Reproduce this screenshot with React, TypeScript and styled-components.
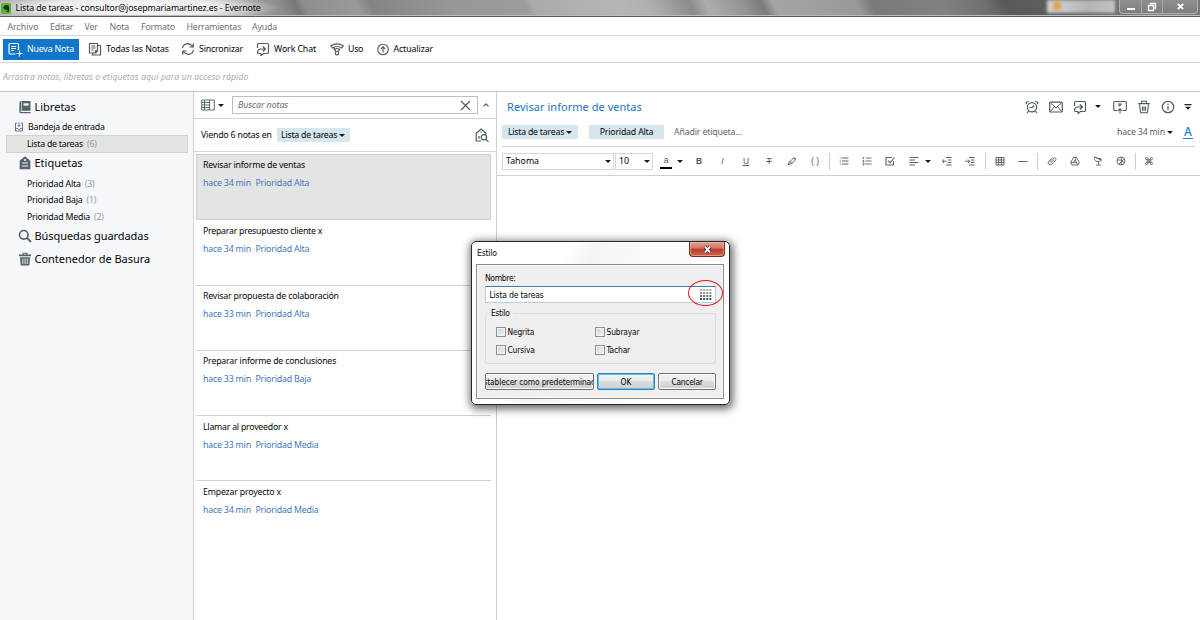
import React from 'react';
import styled, { createGlobalStyle } from 'styled-components';

const GlobalStyle = createGlobalStyle`
  *, *::before, *::after { box-sizing: border-box; }
  body { margin: 0; background: #fff; font-family: "Noto Sans", "Open Sans", sans-serif; overflow: hidden; }
`;

/* ---------- shared pieces ---------- */

const Text = styled.span<{ $size?: number; $track?: number; $color?: string; $italic?: boolean }>`
  font-size: ${p => p.$size ?? 8.8}px;
  letter-spacing: ${p => p.$track ?? -0.2}px;
  color: ${p => p.$color ?? '#050508'};
  font-style: ${p => (p.$italic ? 'italic' : 'normal')};
  line-height: 12px;
  white-space: nowrap;
  flex: none;
`;

const Caret = styled.i<{ $w?: number }>`
  width: 0;
  height: 0;
  flex: none;
  border: ${p => (p.$w ?? 6) / 2}px solid transparent;
  border-top: 3.5px solid #15191b;
  border-bottom: 0;
`;

const Glyph = styled.svg<{ $c?: string }>`
  display: block;
  flex: none;
  fill: none;
  stroke: ${p => p.$c ?? '#4d5c60'};
  stroke-width: 1.2;
  stroke-linejoin: round;
`;

type GlyphProps = { size?: number; color?: string; vb?: number; children: React.ReactNode };
const Icon = ({ size = 14, color, vb = 14, children }: GlyphProps) => (
  <Glyph width={size} height={size} viewBox={`0 0 ${vb} ${vb}`} $c={color}>{children}</Glyph>
);

/* ---------- window frame ---------- */

const Window = styled.div`
  position: relative;
  width: 1200px;
  height: 620px;
  display: flex;
  flex-direction: column;
  background: #fff;
  overflow: hidden;
`;

const TitleBar = styled.header`
  position: relative;
  height: 17px;
  flex: none;
  display: flex;
  align-items: center;
  padding-left: 1px;
  border-bottom: 1px solid #5c5c5c;
  box-shadow: inset 0 -1px 0 #bdbdbd;
  background:
    radial-gradient(ellipse 150px 16px at 130px 8px, rgba(255,255,255,.95) 0, rgba(255,255,255,.75) 60%, rgba(255,255,255,0) 100%),
    linear-gradient(64deg, #aaa 0, #b5b5b5 190px, #8d8d8d 256px, #777 271px, #8d8d8d 278px, #9a9a9a 325px, #848484 338px,
      #979797 410px, #9c9c9c 476px, #aaa 484px, #b6b6b6 560px, #afafaf 590px, #8c8c8c 625px, #adadad 640px,
      #949494 672px, #7c7c7c 690px, #a5a5a5 701px, #999 775px, #797979 789px, #818181 850px, #707070 890px, #585858 910px, #666 990px, #858585 1040px, #777 1080px);
`;

const AppMark = styled.span`
  width: 10px;
  height: 11px;
  margin-right: 4.5px;
  border-radius: 2px;
  background: #5bb637;
`;

const BlurredTab = styled.div`
  position: absolute;
  left: 1047px;
  top: 0;
  width: 68px;
  height: 13px;
  background: radial-gradient(circle at 10px 6px, #e5a23c 0, #e5a23c 3px, transparent 5px),
    linear-gradient(90deg, #cfcfcf, #c6c6c6 30%, #b4b4b4 60%, #c2c2c2);
  filter: blur(1.5px);
`;

const Controls = styled.div`
  position: absolute;
  right: 2px;
  top: 0;
  height: 14px;
  display: flex;
  border: 1px solid #b0b0b0;
  border-top: 0;
  border-radius: 0 0 4px 4px;
  background: linear-gradient(#8f8f8f, #7e7e7e);
`;

const Control = styled.span<{ $w: number }>`
  width: ${p => p.$w}px;
  display: flex;
  align-items: center;
  justify-content: center;
  & + & { border-left: 1px solid #a8a8a8; }
`;

const MenuBar = styled.nav`
  height: 19px;
  flex: none;
  display: flex;
  align-items: center;
  padding: 1px 0 0 7.5px;
  border-bottom: 1px solid #d9d9d9;
`;

const MenuItem = styled.span<{ $w: number }>`
  width: ${p => p.$w}px;
  display: flex;
`;

const Toolbar = styled.div`
  height: 27px;
  flex: none;
  display: flex;
  align-items: center;
  padding-left: 3px;
  border-bottom: 1px solid #d4d4d4;
`;

const NewNote = styled.button`
  width: 76px;
  height: 21px;
  padding: 0 0 0 5px;
  border: 0;
  display: flex;
  align-items: center;
  gap: 4px;
  background: #1076cb;
  font-family: inherit;
`;

const Tool = styled.span<{ $w: number; $gap?: number }>`
  width: ${p => p.$w}px;
  display: flex;
  align-items: center;
  gap: ${p => p.$gap ?? 4}px;
`;

const ToolLabel = styled.span`
  display: flex;
  padding-bottom: 1px;
`;

const ShortcutBar = styled.div`
  height: 29px;
  flex: none;
  display: flex;
  align-items: center;
  padding-left: 3px;
  border-bottom: 1px solid #c9c9c9;
`;

const Body = styled.div`
  flex: 1;
  min-height: 0;
  display: flex;
`;

/* ---------- sidebar ---------- */

const Sidebar = styled.aside`
  width: 194px;
  flex: none;
  background: #f6f7fb;
  border-right: 1px solid #d2d2d4;
  padding-top: 4px;
`;

const Section = styled.div<{ $h: number }>`
  height: ${p => p.$h}px;
  padding: 0 0 1.5px 18px;
  display: flex;
  align-items: center;
  gap: 2.5px;
`;

const Entry = styled.div<{ $h?: number; $on?: boolean; $pad?: number }>`
  height: ${p => p.$h ?? 16.5}px;
  margin: 0 5px 0 6px;
  padding-left: ${p => p.$pad ?? 21}px;
  display: flex;
  align-items: center;
  gap: 4px;
  background: ${p => (p.$on ? '#e4e4e4' : 'transparent')};
  border: ${p => (p.$on ? '1px solid #d2d2d2' : '0')};
  ${p => p.$on && 'padding-left: 20px;'}
`;

/* ---------- note list ---------- */

const ListPane = styled.section`
  width: 303px;
  flex: none;
  border-right: 1px solid #cfcfcf;
  display: flex;
  flex-direction: column;
`;

const SearchRow = styled.div`
  height: 27px;
  flex: none;
  display: flex;
  align-items: center;
  padding-left: 7px;
  border-bottom: 1px solid #d4d4d4;
`;

const SearchBox = styled.div`
  width: 246px;
  height: 18px;
  margin: 0 5px 0 8px;
  padding: 0 6px 0 5px;
  border: 1px solid #bdbdbd;
  display: flex;
  align-items: center;
  justify-content: space-between;
`;

const InfoRow = styled.div`
  height: 33px;
  flex: none;
  display: flex;
  align-items: center;
  padding: 0 6px 0 7px;
  border-bottom: 1px solid #d4d4d4;
`;

const Chip = styled.span<{ $w: number }>`
  width: ${p => p.$w}px;
  height: 14px;
  display: flex;
  align-items: center;
  justify-content: center;
  gap: 2px;
  background: #d5e6ec;
`;

const Spacer = styled.span`flex: 1;`;

const Notes = styled.div`padding: 2px 5px 0 2px;`;

const Note = styled.article<{ $on?: boolean }>`
  height: ${p => (p.$on ? 66.3 : 65.25)}px;
  padding: ${p => (p.$on ? 4.4 : 4.6)}px 0 0 ${p => (p.$on ? 6 : 7)}px;
  display: flex;
  flex-direction: column;
  gap: 6px;
  background: ${p => (p.$on ? '#e4e4e4' : 'transparent')};
  border: 0 solid #d0d0d0;
  border-width: ${p => (p.$on ? '1px' : '0 0 1px')};
  &:last-child { border-bottom: 0; }
`;

const Meta = styled.div`
  display: flex;
  height: 12px;
`;

const MetaTime = styled.span`
  width: 52.5px;
  display: flex;
`;

/* ---------- editor ---------- */

const Editor = styled.main`
  flex: 1;
  min-width: 0;
  display: flex;
  flex-direction: column;
`;

const HeadRow = styled.div`
  height: 31px;
  flex: none;
  display: flex;
  align-items: center;
  padding: 0 6px 1.5px 10px;
`;

const TagRow = styled.div`
  height: 24px;
  margin: 0 5px;
  flex: none;
  display: flex;
  align-items: flex-start;
  padding: 2px 2px 0 0;
  border-bottom: 1px solid #cfcfcf;
  & > * { height: 14px; align-items: center; line-height: 14px; }
`;

const TagGap = styled.span<{ $w: number }>`width: ${p => p.$w}px;`;

const FormatRow = styled.div`
  height: 29px;
  flex: none;
  display: flex;
  align-items: center;
  padding-left: 5px;
  border-bottom: 1px solid #cfcfcf;
`;

const Picker = styled.div<{ $w: number }>`
  width: ${p => p.$w}px;
  height: 17px;
  padding: 0 2px 0 3px;
  border: 1px solid #d5d5dc;
  display: flex;
  align-items: center;
  justify-content: space-between;
  & + & { margin-left: 1px; }
`;

const Cell = styled.span<{ $w: number }>`
  width: ${p => p.$w}px;
  height: 16px;
  flex: none;
  display: flex;
  align-items: center;
  justify-content: center;
`;

const Divider = styled.i`
  width: 1px;
  height: 17px;
  flex: none;
  background: #c5d0dd;
`;

const FontColor = styled.span`
  width: 12px;
  height: 15px;
  display: flex;
  justify-content: center;
  border-bottom: 2px solid #000;
`;

const Letter = styled.span<{ $deco?: string; $italic?: boolean; $bold?: boolean }>`
  font: ${p => (p.$italic ? 'italic' : 'normal')} ${p => (p.$bold ? 700 : 400)} 8.5px/12px "Liberation Sans", sans-serif;
  text-decoration: ${p => p.$deco ?? 'none'};
  color: #555;
`;

const AccentA = styled.span`
  width: 10px;
  margin-left: 9px;
  display: flex;
  justify-content: center;
  font: 500 12px/12px "Noto Sans", sans-serif;
  color: #1a7fd0;
  border-bottom: 1px solid #1a7fd0;
`;

/* ---------- dialog ---------- */

const Dialog = styled.div`
  position: absolute;
  left: 471px;
  top: 241px;
  width: 259px;
  height: 164px;
  padding: 0 5px 5px 4px;
  border: 1.5px solid #24282a;
  border-radius: 5px;
  background: linear-gradient(115deg, #fff 0, #fff 30%, #f4f4f4 38%, #fbfbfb 55%, #fff 100%);
  box-shadow: 1px 2px 8px 2px rgba(0,0,0,.6), inset 0 0 0 1px #fff;
  display: flex;
  flex-direction: column;
  font-family: "DejaVu Sans Condensed", "DejaVu Sans", sans-serif;
`;

const DialogTitle = styled.div`
  height: 22px;
  flex: none;
  display: flex;
  align-items: center;
  justify-content: space-between;
  padding-left: 1px;
  margin-right: -1px;
`;

const CloseButton = styled.span`
  align-self: flex-start;
  width: 36px;
  height: 15px;
  display: flex;
  align-items: center;
  justify-content: center;
  border: 1px solid #6d3029;
  border-top: 0;
  border-radius: 0 0 4px 4px;
  box-shadow: inset 0 0 0 1px rgba(255,200,185,.5);
  background: linear-gradient(#e3a293 0, #d4735f 45%, #b93a25 50%, #cf6651 100%);
`;

const DialogBody = styled.div`
  flex: 1;
  padding: 7px 7px 0 8px;
  border: 1px solid #8a8a8a;
  box-shadow: inset 0 0 0 1px #fafafa;
  background: #efefef;
  display: flex;
  flex-direction: column;
`;

const NameField = styled.div`
  position: relative;
  height: 17px;
  margin-top: 2px;
  padding: 0 3px 0 3.5px;
  display: flex;
  align-items: center;
  justify-content: space-between;
  background: #fff;
  border: 1px solid #b5cfe7;
  border-top-color: #3d7bad;
`;

const RedMark = styled.span`
  position: absolute;
  right: -8px;
  top: -7px;
  width: 35px;
  height: 26px;
  border: 1.4px solid #e3151f;
  border-radius: 50%;
`;

const StyleGroup = styled.fieldset`
  height: 57px;
  margin: 4px 0 0;
  padding: 4px 0 0 10px;
  border: 1px solid #d5dfe5;
  border-radius: 2px;
  min-width: 0;
  display: grid;
  grid-template-columns: 99px 1fr;
  grid-auto-rows: 18px;
`;

const Legend = styled.legend`
  display: flex;
  margin-left: -8px;
  padding: 0 3px;
`;

const Check = styled.label`
  display: flex;
  align-items: center;
  gap: 1.5px;
`;

const Box = styled.i`
  width: 10px;
  height: 10px;
  border: 1px solid #8e8f8f;
  box-shadow: inset 0 0 0 1px #f4f4f4;
  background: linear-gradient(135deg, #cdd1d5, #f5f5f5);
`;

const Buttons = styled.div`
  display: flex;
  justify-content: space-between;
  margin-top: 9px;
`;

const Button = styled.button<{ $w: number; $primary?: boolean }>`
  width: ${p => p.$w}px;
  height: 17px;
  padding: 0;
  display: flex;
  align-items: center;
  justify-content: center;
  overflow: hidden;
  font-family: inherit;
  border: 1px solid ${p => (p.$primary ? '#3c7fb1' : '#707070')};
  border-radius: 2px;
  box-shadow: inset 0 0 0 1px ${p => (p.$primary ? '#4cc8f0' : '#fbfbfb')};
  background: linear-gradient(#f2f2f2 0, #ebebeb 50%, #dcdcdc 50%, #cfcfcf 100%);
`;

/* ---------- data ---------- */

const menus: [string, number, number?][] = [
  ['Archivo', 42.5, 0], ['Editar', 34.5], ['Ver', 25], ['Nota', 31.5], ['Formato', 45.5], ['Herramientas', 65.5], ['Ayuda', 40],
];

const notes = [
  { title: 'Revisar informe de ventas', time: 'hace 34 min', tag: 'Prioridad Alta', on: true },
  { title: 'Preparar presupuesto cliente x', time: 'hace 34 min', tag: 'Prioridad Alta', track: -0.26 },
  { title: 'Revisar propuesta de colaboración', time: 'hace 33 min', tag: 'Prioridad Alta' },
  { title: 'Preparar informe de conclusiones', time: 'hace 33 min', tag: 'Prioridad Baja' },
  { title: 'Llamar al proveedor x', time: 'hace 33 min', tag: 'Prioridad Media', track: -0.25 },
  { title: 'Empezar proyecto x', time: 'hace 34 min', tag: 'Prioridad Media' },
];

const INK = '#606060';
const Small = ({ children }: { children: React.ReactNode }) => <Icon size={10} vb={10} color={INK}>{children}</Icon>;
const Dots = () => (
  <Glyph width={12} height={12} viewBox="0 0 12 12" $c="none">
    {[0, 1, 2, 3].map(r => [0, 1, 2, 3].map(c => (
      <rect key={`${r}${c}`} x={c * 3.1} y={r * 3} width={2} height={2} fill={['#aaa', '#8c9498', '#69757b', '#47535a'][r]} />
    )))}
  </Glyph>
);

const ShareIcon = () => (
  <Icon>
    <path d="M1.500 6V2.800Q1.500 1.500 2.800 1.500H11.200Q12.500 1.500 12.500 2.800V10.200Q12.500 11.500 11.200 11.500H7.500L5 13.600V11.500H2.800Q1.500 11.500 1.500 10.200Q1.800 7 5 7H9M6.800 4.500L9.400 7L6.800 9.500" />
  </Icon>
);

const Trash = () => (
  <Icon><path d="M2.500 4.500L3.600 12.800H10.400L11.500 4.500M1.200 3.600H12.800M4.500 3.500V1.300H9.500V3.500M5.500 6.500V10.800M7 6.500V10.800M8.500 6.500V10.800" strokeWidth={1.1} /></Icon>
);

/* ---------- page ---------- */

export default function App() {
  return (
    <Window>
      <GlobalStyle />
      <TitleBar>
        <AppMark>
          <Glyph width={10} height={11} viewBox="0 0 10 11" $c="none">
            <path d="M2 4.200L4.200 2H6.300Q8 2 8.200 4.200Q8.500 7 7.600 9H5.600V7.800H6.600V7H4.600V6.500Q2.500 6.700 2 4.200Z" fill="#20331c" />
          </Glyph>
        </AppMark>
        <Text $track={-0.13}>Lista de tareas - consultor@josepmariamartinez.es - Evernote</Text>
        <BlurredTab />
        <Controls>
          <Control $w={21}><Icon size={10} vb={10} color="#fff"><path d="M1 7H9" strokeWidth={2} /></Icon></Control>
          <Control $w={21}><Icon size={10} vb={10} color="#fff"><path d="M3.500 2.500V1.500H8.500V6.500H7.500M1.500 3.500H6.500V8.500H1.500Z" strokeWidth={1.400} /></Icon></Control>
          <Control $w={35}><Icon size={9} vb={10} color="#fff"><path d="M2 2L8 8M8 2L2 8" strokeWidth={2} /></Icon></Control>
        </Controls>
      </TitleBar>

      <MenuBar>
        {menus.map(([label, w, track]) => (
          <MenuItem key={label} $w={w}><Text $track={track ?? -0.17} $color="#6f6f6f">{label}</Text></MenuItem>
        ))}
      </MenuBar>

      <Toolbar>
        <NewNote>
          <Icon size={15} vb={15} color="#fff">
            <path d="M7.500 12H2.200Q1 12 1 10.800V2.700Q1 1.500 2.200 1.500H9.300Q10.500 1.500 10.500 2.700V8M3.200 4.500H8M3.200 6.500H8M3.200 8.500H6M8.500 11.500H14.500M11.500 8.500V14.500" />
          </Icon>
          <ToolLabel><Text $track={-0.18} $color="#fff">Nueva Nota</Text></ToolLabel>
        </NewNote>
        <TagGap $w={9} />
        <Tool $w={93}>
          <Icon><path d="M1.500 1.500H9.500V9L7.500 11H1.500ZM10 3.500H12.500V13H4.500V11.500M3.400 4H7.500M3.400 6H7.500M3.400 8H5.500M7.300 11V8.800H9.500" /></Icon>
          <ToolLabel><Text $track={-0.1}>Todas las Notas</Text></ToolLabel>
        </Tool>
        <Tool $w={75}>
          <Icon><path d="M1.500 6Q2.200 2 6.500 1.600Q9.500 1.600 11.800 4.500M12.300 1.200V5H8.500M12.500 8Q11.800 12 7.500 12.400Q4.500 12.400 2.200 9.500M1.700 12.800V9H5.500" /></Icon>
          <ToolLabel><Text $track={-0.17}>Sincronizar</Text></ToolLabel>
        </Tool>
        <Tool $w={74}><ShareIcon /><ToolLabel><Text $track={-0.11}>Work Chat</Text></ToolLabel></Tool>
        <Tool $w={46.5}>
          <Icon><path d="M.8 3.800Q7-.2 13.200 3.800L11.500 6Q7 3 2.500 6ZM4.300 5.200V7.500Q7 5.500 9.700 7.500L7.800 9.300M4.300 7.500L6 9.500" /><circle cx="6.900" cy="11.200" r="1.700" /></Icon>
          <ToolLabel><Text $track={-0.3}>Uso</Text></ToolLabel>
        </Tool>
        <Tool $w={80}>
          <Icon size={13}><circle cx="6.500" cy="7" r="5.700" /><path d="M6.500 10.200V4.200M4 6.500L6.500 4L9 6.500" /></Icon>
          <ToolLabel><Text $track={-0.11}>Actualizar</Text></ToolLabel>
        </Tool>
      </Toolbar>

      <ShortcutBar>
        <Text $italic $track={0.02} $color="#adadad">Arrastra notas, libretas o etiquetas aquí para un acceso rápido</Text>
      </ShortcutBar>

      <Body>
        <Sidebar>
          <Section $h={23}>
            <Icon color="none"><g fill="#536368"><path d="M1.500 1.500H3V10.500H2.800Q2.300 11.300 3 12H12.500V13.200H3Q1.300 13 1.300 11.500Z" /><path d="M3.600 1H12.500V10.800H3.600Z" /><path d="M5.500 3.300H10.600V5.600H5.500Z" fill="#f6f7fb" /></g></Icon>
            <Text $size={11} $track={0}>Libretas</Text>
          </Section>
          <Entry $pad={8} $h={15.5}>
            <Icon size={10} vb={10}><path d="M3.300 1H1.500V9H8.500V1H6.700M5 .5V4.500M3.500 3L5 4.500L6.500 3M1.500 6.500H3.500L4.300 7.500H5.700L6.500 6.500H8.500" strokeWidth={.8} /></Icon>
            <Text $track={-0.24}>Bandeja de entrada</Text>
          </Entry>
          <Entry $h={18} $on><Text $track={-0.26}>Lista de tareas</Text><Text $color="#9a9a9a">(6)</Text></Entry>
          <Section $h={23}>
            <Icon color="none"><g fill="#536368"><path d="M7 .3L12.300 4.800V13.300H1.700V4.800Z" /><circle cx="7" cy="4" r="1.100" fill="#f6f7fb" /><path d="M4 6.500H10V7.600H4ZM4 9.500H10V10.600H4Z" fill="#f6f7fb" /></g></Icon>
            <Text $size={11} $track={0}>Etiquetas</Text>
          </Section>
          <Entry><Text>Prioridad Alta</Text><Text $color="#9a9a9a">(3)</Text></Entry>
          <Entry><Text>Prioridad Baja</Text><Text $color="#9a9a9a">(1)</Text></Entry>
          <Entry><Text>Prioridad Media</Text><Text $color="#9a9a9a">(2)</Text></Entry>
          <Section $h={23}>
            <Icon color="#536368"><circle cx="5.800" cy="5.800" r="4.300" strokeWidth={1.600} /><path d="M9 9L13 13" strokeWidth={1.800} /></Icon>
            <Text $size={11} $track={-0.06}>Búsquedas guardadas</Text>
          </Section>
          <Section $h={23}>
            <Icon color="none"><g fill="#536368"><path d="M1 2.500H4.500V.8H9.500V2.500H13V4.300H1ZM5.600 1.800V2.500H8.400V1.800Z" fillRule="evenodd" /><path d="M2 5.200H12L11.300 13.500H2.700Z" /><path d="M4.400 6.500H5.300V12H4.400ZM6.600 6.500H7.500V12H6.600ZM8.800 6.500H9.700V12H8.800Z" fill="#f6f7fb" /></g></Icon>
            <Text $size={11} $track={-0.02}>Contenedor de Basura</Text>
          </Section>
        </Sidebar>

        <ListPane>
          <SearchRow>
            <Icon><path d="M.7 2H13.300V12H.7ZM8.500 2V12M.7 4.500H8.500M.7 7H8.500M.7 9.500H8.500M3.500 2V12" strokeWidth={.9} /></Icon>
            <TagGap $w={3} />
            <Caret />
            <SearchBox>
              <Text $italic $track={-0.05} $color="#6a6a6a">Buscar notas</Text>
              <Icon size={11} vb={11}><path d="M1 1L10 10M10 1L1 10" /></Icon>
            </SearchBox>
            <Icon size={6} vb={6}><path d="M.5 4.300L3 1.800L5.500 4.300" /></Icon>
          </SearchRow>
          <InfoRow>
            <Text>Viendo 6 notas en</Text>
            <TagGap $w={5} />
            <Chip $w={73}><Text $track={-0.24}>Lista de tareas</Text><Caret /></Chip>
            <Spacer />
            <Icon size={15} vb={15}><path d="M6 13H1.200V5.200L6.200 1L11 5.200V6.500M4 8V11M6.200 3.600V4.800" /><circle cx="8.900" cy="9.300" r="2.700" /><path d="M10.900 11.300L13.500 13.900" /></Icon>
          </InfoRow>
          <Notes>
            {notes.map(n => (
              <Note key={n.title} $on={n.on}>
                <Text $track={n.track ?? -0.2}>{n.title}</Text>
                <Meta>
                  <MetaTime><Text $color="#4279bb">{n.time}</Text></MetaTime>
                  <Text $color="#4279bb">{n.tag}</Text>
                </Meta>
              </Note>
            ))}
          </Notes>
        </ListPane>

        <Editor>
          <HeadRow>
            <Text $size={11} $track={0.04} $color="#1b72c0">Revisar informe de ventas</Text>
            <Spacer />
            <Cell $w={24}><Icon><circle cx="7" cy="7.300" r="4.600" /><path d="M4.500 7.500H7.200L9.200 5.500M1 4.200Q1 1.500 3.800 1.500M13 4.200Q13 1.500 10.200 1.500M3.500 11L2 13M10.500 11L12 13" /></Icon></Cell>
            <Cell $w={24}><Icon><rect x=".7" y="2.200" width="12.600" height="9.800" rx="1" /><path d="M1.500 3L7 7.800L12.500 3M1.500 11.300L5.200 7M12.500 11.300L8.800 7" strokeWidth={1} /></Icon></Cell>
            <Cell $w={24}><ShareIcon /></Cell>
            <Cell $w={12}><Caret /></Cell>
            <Cell $w={31}><Icon><path d="M4.200 10.500H1.800Q.7 10.500.7 9.500V2.500Q.7 1.500 1.800 1.500H12.200Q13.300 1.500 13.300 2.500V9.500Q13.300 10.500 12.200 10.500H9.800M7 13.500V8.800M4.800 10.800L7 8.600L9.200 10.800M6 6.500V3.700H7.500Q8.500 4.500 7.500 5.300H6" strokeWidth={1.100} /></Icon></Cell>
            <Cell $w={18}><Trash /></Cell>
            <Cell $w={29}><Icon><circle cx="7" cy="7" r="5.700" /><path d="M7 6V10M7 3.800V5" /></Icon></Cell>
            <Cell $w={12}><Icon size={8} vb={8} color="none"><path d="M.5 1H7.500V2.200H.5ZM1 3.700H7L4 6.700Z" fill="#222" /></Icon></Cell>
          </HeadRow>
          <TagRow>
            <Chip $w={76}><Text $track={-0.24}>Lista de tareas</Text><Caret /></Chip>
            <TagGap $w={11} />
            <Chip $w={75}><Text>Prioridad Alta</Text></Chip>
            <TagGap $w={10} />
            <Text $track={-0.17} $color="#666">Añadir etiqueta...</Text>
            <Spacer />
            <Tool $w={57} $gap={2}><Text $color="#5c5c60">hace 34 min</Text><Caret /></Tool>
            <AccentA>A</AccentA>
          </TagRow>
          <FormatRow>
            <Picker $w={112}><Text $track={0}>Tahoma</Text><Caret /></Picker>
            <Picker $w={38}><Text $track={0}>10</Text><Caret /></Picker>
            <Cell $w={26}><FontColor><Letter>a</Letter></FontColor></Cell>
            <Cell $w={2}><Caret /></Cell>
            <Cell $w={36}><Letter $bold>B</Letter></Cell>
            <Cell $w={11}><Letter $italic>I</Letter></Cell>
            <Cell $w={36}><Letter $deco="underline">U</Letter></Cell>
            <Cell $w={10}><Letter $deco="line-through">T</Letter></Cell>
            <Cell $w={36}><Small><path d="M1 8.800L2.500 6L6.500 2L8.500 4L4.500 7.500L1 8.800M3 5.500L5 7.500M6.500 2L9 2.500" strokeWidth={1} /></Small></Cell>
            <Cell $w={10}><Letter>( )</Letter></Cell>
            <TagGap $w={9} /><Divider />
            <Cell $w={28}><Small><path d="M3 2H9.500M3 5H9.500M3 8H9.500M.8 2H1.800M.8 5H1.800M.8 8H1.800" strokeWidth={1} /></Small></Cell>
            <Cell $w={18}><Small><path d="M3.500 2H9.500M3.500 5H9.500M3.500 8H9.500M1.300.8V3M.6 4.400H1.800V5.500H.6M.6 7H2V9H.6" strokeWidth={.9} /></Small></Cell>
            <Cell $w={28}><Small><path d="M8.500 5V9H1V1.500H7M3 4.500L5 6.800L9.500 1.500" strokeWidth={1.100} /></Small></Cell>
            <Cell $w={20}><Small><path d="M.5 1.500H9.500M.5 4H6M.5 6.500H9.500M.5 9H6" strokeWidth={1} /></Small></Cell>
            <Cell $w={8}><Caret /></Cell>
            <Cell $w={29}><Small><path d="M4 1.500H9.500M6 4H9.500M6 6.500H9.500M4 9H9.500M0 5.200H4.500M2 3.500L.3 5.200L2 7" strokeWidth={1} /></Small></Cell>
            <Cell $w={18}><Small><path d="M4 1.500H9.500M6 4H9.500M6 6.500H9.500M4 9H9.500M0 5.200H4.500M3 3.500L4.700 5.200L3 7" strokeWidth={1} /></Small></Cell>
            <TagGap $w={6} /><Divider />
            <Cell $w={27}><Small><path d="M1 1.500H9V9H1ZM1 4H9M1 6.500H9M3.700 1.500V9M6.300 1.500V9" strokeWidth={1} /></Small></Cell>
            <Cell $w={20}><Small><path d="M.5 5.500H9.500" strokeWidth={1} /></Small></Cell>
            <TagGap $w={4} /><Divider />
            <Cell $w={27}><Small><path d="M2.500 6L6 2.500Q7.500 1.200 8.700 2.300Q9.500 3.500 8.300 4.700L4.500 8.300Q3 9.500 1.500 8.300Q.5 7 1.700 5.500L5 2.200M3.500 7L7 3.800" strokeWidth={.9} /></Small></Cell>
            <Cell $w={19}><Small><path d="M3.500 1.500H6.500L9.300 6.500L8 9H2L.7 6.500ZM5 4L3.500 6.700H6.600ZM.7 6.500H3.500M5 4L6.500 1.500M6.600 6.700L8 9" strokeWidth={.9} /></Small></Cell>
            <Cell $w={28}><Small><path d="M1.500 1Q.5 4.500 4 5.500Q7 6 8.500 4ZM1.500 1L8.500 4M5 2.500H8M5.500 5.700V9M3 9H8" strokeWidth={.9} /></Small></Cell>
            <Cell $w={18}><Small><circle cx="5" cy="5" r="4" strokeWidth={.9} /><path d="M5 1L6 5L3 8.300M1.200 4L5 4L8.500 7M8.500 3L5 5.500L5.500 9" strokeWidth={.9} /></Small></Cell>
            <TagGap $w={4.5} /><Divider />
            <Cell $w={26}><Small><path d="M4 4H6V6H4ZM4 4V2.700Q3.800 1.500 2.600 1.500Q1.400 1.600 1.500 2.700Q1.600 4 4 4M6 4V2.700Q6.200 1.500 7.400 1.500Q8.600 1.600 8.500 2.700Q8.400 4 6 4M4 6V7.300Q3.800 8.500 2.600 8.500Q1.400 8.400 1.500 7.300Q1.600 6 4 6M6 6V7.300Q6.200 8.500 7.400 8.500Q8.600 8.400 8.500 7.300Q8.400 6 6 6" strokeWidth={1} /></Small></Cell>
          </FormatRow>
        </Editor>
      </Body>

      <Dialog>
        <DialogTitle>
          <Text $size={8.6}>Estilo</Text>
          <CloseButton>
            <Icon size={9} vb={9} color="#4b3335"><path d="M1.800 1.500L7.200 7.500M7.200 1.500L1.800 7.500" strokeWidth={3.400} /><path d="M2 1.700L7 7.300M7 1.700L2 7.300" stroke="#fff" strokeWidth={1.900} /></Icon>
          </CloseButton>
        </DialogTitle>
        <DialogBody>
          <Text $size={8.5} $track={-0.35}>Nombre:</Text>
          <NameField>
            <Text $size={8.6} $track={-0.2}>Lista de tareas</Text>
            <Dots />
            <RedMark />
          </NameField>
          <StyleGroup>
            <Legend><Text $size={8.4} $track={-0.3}>Estilo</Text></Legend>
            {['Negrita', 'Subrayar', 'Cursiva', 'Tachar'].map(s => (
              <Check key={s}><Box /><Text $size={8.4} $track={-0.15}>{s}</Text></Check>
            ))}
          </StyleGroup>
          <Buttons>
            <Button $w={109}><Text $size={8.4} $track={-0.15}>Establecer como predeterminado</Text></Button>
            <Button $w={58} $primary><Text $size={8.4} $track={0}>OK</Text></Button>
            <Button $w={58}><Text $size={8.4} $track={-0.25}>Cancelar</Text></Button>
          </Buttons>
        </DialogBody>
      </Dialog>
    </Window>
  );
}
